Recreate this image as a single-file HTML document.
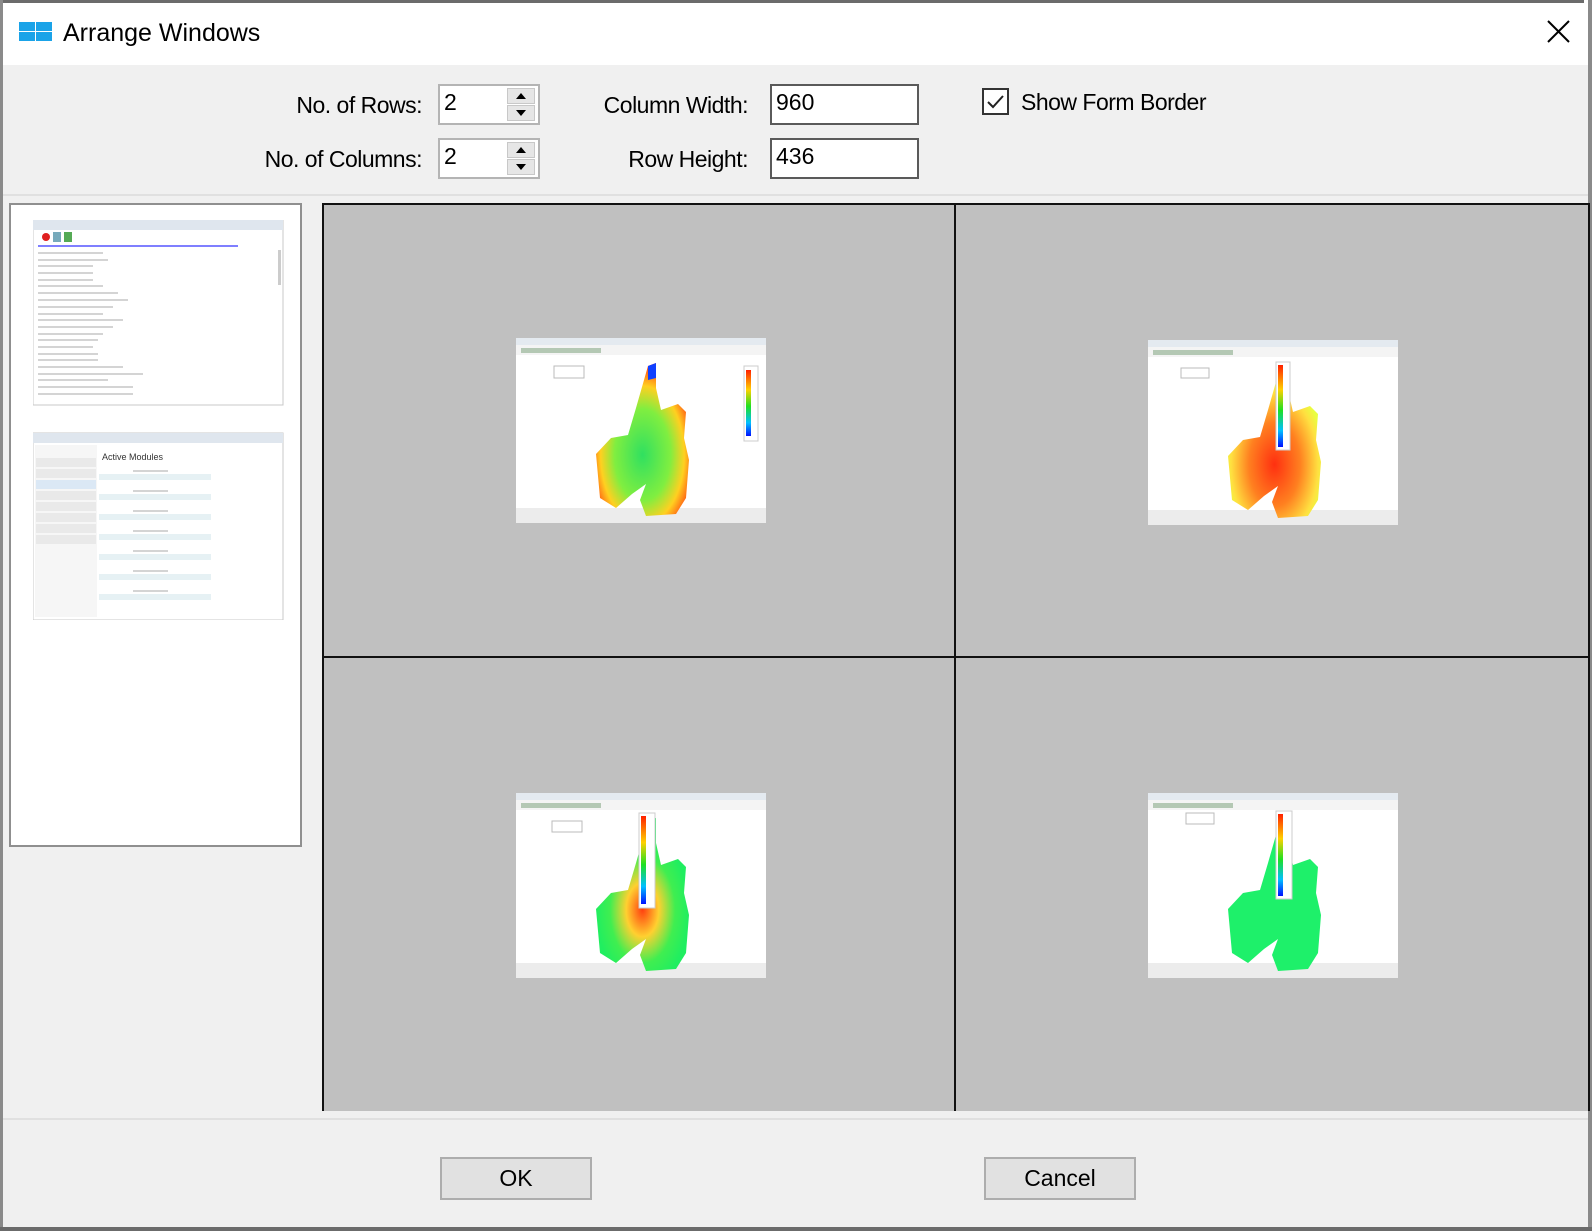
<!DOCTYPE html>
<html><head><meta charset="utf-8"><style>
*{margin:0;padding:0;box-sizing:border-box}
body{width:1592px;height:1231px;background:#fff;position:relative;overflow:hidden;font-family:"Liberation Sans",sans-serif;color:#000}
.a{position:absolute}
.lbl{position:absolute;font-size:23px;letter-spacing:-0.5px;text-align:right;line-height:26px}
.spin{position:absolute;background:#fff;border:2px solid #b4b4b4;}
.spin span{position:absolute;left:4px;top:3px;font-size:23px}
.sb{position:absolute;right:3px;width:28px;height:16px;background:#e6e6e6;border:1px solid #c8c8c8}
.tb{position:absolute;background:#fff;border:2px solid #5a5a5a}
.tb span{position:absolute;left:4px;top:3px;font-size:23px}
.btn{position:absolute;background:#e1e1e1;border:2px solid #adadad;font-size:23px;text-align:center;line-height:39px}
.th{position:absolute;width:250px;height:185px}
</style></head><body>
<div class="a" style="left:0;top:0;width:1584px;height:3px;background:#6b6b6b"></div>
<div class="a" style="left:0;top:0;width:3px;height:1231px;background:#8a8a8a"></div>
<div class="a" style="left:1588px;top:0;width:4px;height:1231px;background:#8a8a8a"></div>
<div class="a" style="left:0;top:1227px;width:1592px;height:4px;background:#6b6b6b"></div>
<div class="a" style="left:3px;top:3px;width:1585px;height:62px;background:#fff"></div>
<div class="a" style="left:19px;top:22px;width:16px;height:9px;background:#1aa3e8"></div>
<div class="a" style="left:36px;top:22px;width:16px;height:9px;background:#1aa3e8"></div>
<div class="a" style="left:19px;top:32px;width:16px;height:9px;background:#1aa3e8"></div>
<div class="a" style="left:36px;top:32px;width:16px;height:9px;background:#1aa3e8"></div>
<div class="a" style="left:63px;top:19px;font-size:25px;letter-spacing:0px">Arrange Windows</div>
<svg class="a" style="left:1546px;top:20px" width="26" height="24"><path d="M2 1 L23 22 M23 1 L2 22" stroke="#000" stroke-width="2"/></svg>
<div class="a" style="left:3px;top:65px;width:1585px;height:1162px;background:#f0f0f0"></div>
<div class="a" style="left:3px;top:194px;width:1585px;height:2px;background:#e0e0e0"></div>
<div class="lbl" style="left:200px;top:92px;width:222px">No. of Rows:</div>
<div class="lbl" style="left:200px;top:146px;width:222px">No. of Columns:</div>
<div class="spin" style="left:438px;top:84px;width:102px;height:41px"><span>2</span>
<div class="sb" style="top:2px"><svg width="26" height="14"><path d="M8 10 L18 10 L13 4Z" fill="#000"/></svg></div>
<div class="sb" style="top:19px"><svg width="26" height="14"><path d="M8 4 L18 4 L13 10Z" fill="#000"/></svg></div></div>
<div class="spin" style="left:438px;top:138px;width:102px;height:41px"><span>2</span>
<div class="sb" style="top:2px"><svg width="26" height="14"><path d="M8 10 L18 10 L13 4Z" fill="#000"/></svg></div>
<div class="sb" style="top:19px"><svg width="26" height="14"><path d="M8 4 L18 4 L13 10Z" fill="#000"/></svg></div></div>
<div class="lbl" style="left:560px;top:92px;width:188px">Column Width:</div>
<div class="lbl" style="left:560px;top:146px;width:188px">Row Height:</div>
<div class="tb" style="left:770px;top:84px;width:149px;height:41px"><span>960</span></div>
<div class="tb" style="left:770px;top:138px;width:149px;height:41px"><span>436</span></div>
<div class="a" style="left:982px;top:88px;width:27px;height:27px;border:2px solid #333;background:#fff"></div>
<svg class="a" style="left:982px;top:88px" width="27" height="27"><path d="M6 14 L11 19 L21 8" stroke="#222" stroke-width="2" fill="none"/></svg>
<div class="a" style="left:1021px;top:89px;font-size:23px;letter-spacing:-0.5px">Show Form Border</div>
<div class="a" style="left:9px;top:203px;width:293px;height:644px;background:#fff;border:2px solid #8f8f8f"></div>
<svg class="a" style="left:33px;top:220px" width="252" height="400">
<rect x="0" y="0" width="250" height="185" fill="#fff" stroke="#c8c8c8"/>
<rect x="0" y="0" width="250" height="10" fill="#dfe6ee"/>
<circle cx="13" cy="17" r="4" fill="#e02020"/><rect x="20" y="12" width="8" height="10" fill="#7ab"/><rect x="31" y="12" width="8" height="10" fill="#5a5"/>
<line x1="5" y1="26" x2="205" y2="26" stroke="#55f" stroke-width="1.5"/>
<g stroke="#bbb" stroke-width="1.2">
<line x1="5" y1="33" x2="70" y2="33"/><line x1="5" y1="40" x2="75" y2="40"/><line x1="5" y1="46" x2="60" y2="46"/><line x1="5" y1="53" x2="60" y2="53"/><line x1="5" y1="60" x2="60" y2="60"/><line x1="5" y1="66" x2="70" y2="66"/><line x1="5" y1="73" x2="85" y2="73"/><line x1="5" y1="80" x2="95" y2="80"/><line x1="5" y1="87" x2="80" y2="87"/><line x1="5" y1="94" x2="70" y2="94"/><line x1="5" y1="100" x2="90" y2="100"/><line x1="5" y1="107" x2="80" y2="107"/><line x1="5" y1="114" x2="70" y2="114"/><line x1="5" y1="120" x2="65" y2="120"/><line x1="5" y1="127" x2="60" y2="127"/><line x1="5" y1="134" x2="65" y2="134"/><line x1="5" y1="140" x2="65" y2="140"/><line x1="5" y1="147" x2="90" y2="147"/><line x1="5" y1="154" x2="110" y2="154"/><line x1="5" y1="160" x2="75" y2="160"/><line x1="5" y1="167" x2="100" y2="167"/><line x1="5" y1="174" x2="100" y2="174"/></g>
<rect x="245" y="30" width="3" height="35" fill="#ccc"/>
<g transform="translate(0,213)">
<rect x="0" y="0" width="250" height="187" fill="#fff" stroke="#c8c8c8"/>
<rect x="0" y="0" width="250" height="10" fill="#dfe6ee"/>
<rect x="2" y="12" width="62" height="172" fill="#f6f6f6"/>
<g fill="#e9e9e9"><rect x="3" y="25" width="60" height="9"/><rect x="3" y="36" width="60" height="9"/><rect x="3" y="47" width="60" height="9" fill="#dbe8f5"/><rect x="3" y="58" width="60" height="9"/><rect x="3" y="69" width="60" height="9"/><rect x="3" y="80" width="60" height="9"/><rect x="3" y="91" width="60" height="9"/><rect x="3" y="102" width="60" height="9"/></g>
<text x="69" y="27" font-size="9" font-family="Liberation Sans" fill="#333">Active Modules</text>
<g fill="#e6f1f4"><rect x="66" y="41" width="112" height="6"/><rect x="66" y="61" width="112" height="6"/><rect x="66" y="81" width="112" height="6"/><rect x="66" y="101" width="112" height="6"/><rect x="66" y="121" width="112" height="6"/><rect x="66" y="141" width="112" height="6"/><rect x="66" y="161" width="112" height="6"/></g>
<g stroke="#aaa"><line x1="100" y1="38" x2="135" y2="38"/><line x1="100" y1="58" x2="135" y2="58"/><line x1="100" y1="78" x2="135" y2="78"/><line x1="100" y1="98" x2="135" y2="98"/><line x1="100" y1="118" x2="135" y2="118"/><line x1="100" y1="138" x2="135" y2="138"/><line x1="100" y1="158" x2="135" y2="158"/></g>
</g></svg>
<div class="a" style="left:322px;top:203px;width:1268px;height:908px;background:#c0c0c0;border:2px solid #111;border-bottom:none;border-right:2px solid #111"></div>
<div class="a" style="left:954px;top:203px;width:2px;height:908px;background:#111"></div>
<div class="a" style="left:322px;top:656px;width:1268px;height:2px;background:#111"></div>
<div class="a" style="left:3px;top:1118px;width:1585px;height:2px;background:#e0e0e0"></div>
<svg width="0" height="0" style="position:absolute"><defs>
<radialGradient id="g1" cx="0.5" cy="0.6" r="0.6"><stop offset="0" stop-color="#30e060"/><stop offset="0.5" stop-color="#80ee40"/><stop offset="0.75" stop-color="#ffd020"/><stop offset="1" stop-color="#ff3010"/></radialGradient>
<radialGradient id="g2" cx="0.5" cy="0.65" r="0.55"><stop offset="0" stop-color="#ff3010"/><stop offset="0.5" stop-color="#ff8020"/><stop offset="0.85" stop-color="#ffe040"/><stop offset="1" stop-color="#e8ff40"/></radialGradient>
<radialGradient id="g3" cx="0.5" cy="0.6" r="0.5"><stop offset="0" stop-color="#ff4010"/><stop offset="0.35" stop-color="#ffd030"/><stop offset="0.7" stop-color="#40ee50"/><stop offset="1" stop-color="#20ee60"/></radialGradient>
<linearGradient id="cb" x1="0" y1="0" x2="0" y2="1"><stop offset="0" stop-color="#ff2000"/><stop offset="0.3" stop-color="#ffd000"/><stop offset="0.55" stop-color="#20e020"/><stop offset="0.8" stop-color="#00c0ff"/><stop offset="1" stop-color="#0010ff"/></linearGradient>
<symbol id="fr" viewBox="0 0 250 185"><rect x="0" y="0" width="250" height="185" fill="#fff"/><rect x="0" y="0" width="250" height="7" fill="#e4eaf0"/><rect x="0" y="7" width="250" height="10" fill="#f4f4f4"/><g fill="#8a8"><rect x="5" y="10" width="80" height="5" opacity=".6"/></g><rect x="0" y="170" width="250" height="15" fill="#ececec"/></symbol>
<path id="bl" d="M132 28 L140 25 L140 50 L145 72 L162 66 L170 74 L168 100 L173 122 L170 160 L160 176 L130 178 L124 162 L130 146 L116 156 L100 170 L84 160 L80 116 L95 100 L112 97 L120 70 Z"/>
</defs></svg>
<svg class="th" style="left:516px;top:338px" viewBox="0 0 250 185"><use href="#fr"/><use href="#bl" fill="url(#g1)"/><path d="M132 28 L140 25 L140 40 L132 42Z" fill="#1040ff"/><rect x="38" y="28" width="30" height="12" fill="#fff" stroke="#bbb"/><rect x="228" y="28" width="14" height="75" fill="#fff" stroke="#ccc"/><rect x="230" y="32" width="5" height="66" fill="url(#cb)"/></svg>
<svg class="th" style="left:1148px;top:340px" viewBox="0 0 250 185"><use href="#fr"/><use href="#bl" fill="url(#g2)"/><rect x="33" y="28" width="28" height="10" fill="#fff" stroke="#bbb"/><rect x="128" y="22" width="14" height="88" fill="#fff" stroke="#ccc"/><rect x="130" y="25" width="5" height="82" fill="url(#cb)"/></svg>
<svg class="th" style="left:516px;top:793px" viewBox="0 0 250 185"><use href="#fr"/><use href="#bl" fill="url(#g3)"/><rect x="36" y="28" width="30" height="11" fill="#fff" stroke="#bbb"/><rect x="123" y="20" width="16" height="95" fill="#fff" stroke="#ccc"/><rect x="125" y="23" width="5" height="88" fill="url(#cb)"/></svg>
<svg class="th" style="left:1148px;top:793px" viewBox="0 0 250 185"><use href="#fr"/><use href="#bl" fill="#1ef06a"/><rect x="38" y="20" width="28" height="11" fill="#fff" stroke="#bbb"/><rect x="128" y="18" width="16" height="88" fill="#fff" stroke="#ccc"/><rect x="130" y="21" width="5" height="82" fill="url(#cb)"/></svg>
<div class="btn" style="left:440px;top:1157px;width:152px;height:43px">OK</div>
<div class="btn" style="left:984px;top:1157px;width:152px;height:43px">Cancel</div>
</body></html>
